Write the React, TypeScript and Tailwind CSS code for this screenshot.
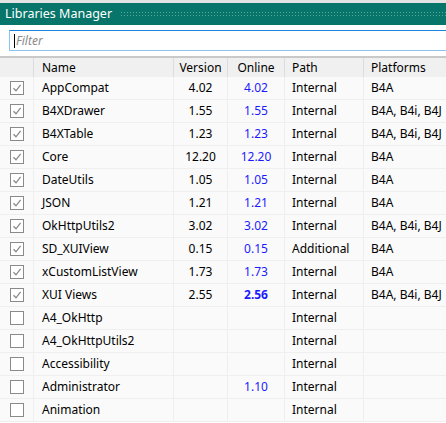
import React from "react";

type Row = {
  checked: boolean;
  name: string;
  version: string;
  online: string;
  onlineBold?: boolean;
  path: string;
  platforms: string;
};

const rows: Row[] = [
  { checked: true, name: "AppCompat", version: "4.02", online: "4.02", path: "Internal", platforms: "B4A" },
  { checked: true, name: "B4XDrawer", version: "1.55", online: "1.55", path: "Internal", platforms: "B4A, B4i, B4J" },
  { checked: true, name: "B4XTable", version: "1.23", online: "1.23", path: "Internal", platforms: "B4A, B4i, B4J" },
  { checked: true, name: "Core", version: "12.20", online: "12.20", path: "Internal", platforms: "B4A" },
  { checked: true, name: "DateUtils", version: "1.05", online: "1.05", path: "Internal", platforms: "B4A" },
  { checked: true, name: "JSON", version: "1.21", online: "1.21", path: "Internal", platforms: "B4A" },
  { checked: true, name: "OkHttpUtils2", version: "3.02", online: "3.02", path: "Internal", platforms: "B4A, B4i, B4J" },
  { checked: true, name: "SD_XUIView", version: "0.15", online: "0.15", path: "Additional", platforms: "B4A" },
  { checked: true, name: "xCustomListView", version: "1.73", online: "1.73", path: "Internal", platforms: "B4A" },
  { checked: true, name: "XUI Views", version: "2.55", online: "2.56", onlineBold: true, path: "Internal", platforms: "B4A, B4i, B4J" },
  { checked: false, name: "A4_OkHttp", version: "", online: "", path: "Internal", platforms: "" },
  { checked: false, name: "A4_OkHttpUtils2", version: "", online: "", path: "Internal", platforms: "" },
  { checked: false, name: "Accessibility", version: "", online: "", path: "Internal", platforms: "" },
  { checked: false, name: "Administrator", version: "", online: "1.10", path: "Internal", platforms: "" },
  { checked: false, name: "Animation", version: "", online: "", path: "Internal", platforms: "" },
];

const cols = "grid grid-cols-[34px_140px_54px_57px_79px_1fr]";

function Check({ on }: { on: boolean }) {
  return (
    <div className="w-[14px] h-[14px] border border-[#8a8a8a] bg-white flex items-center justify-center">
      {on && (
        <svg width="10" height="10" viewBox="0 0 10 10">
          <path d="M1.5 5.2 L4 7.8 L8.6 1.8" fill="none" stroke="#8a8a8a" strokeWidth="1.3" />
        </svg>
      )}
    </div>
  );
}

export default function App() {
  return (
    <div
      className="w-[446px] h-[423px] overflow-hidden bg-white text-[12px] text-black"
      style={{ fontFamily: '"Segoe UI", "Noto Sans", sans-serif' }}
    >
      <div className="h-[3px] bg-[#e4e4e4]" />
      <div className="h-[22px] bg-[#08756a] flex items-center pl-[5px]">
        <span className="text-white text-[12.5px] leading-none whitespace-nowrap">Libraries Manager</span>
        <div className="ml-[8px] flex-1 h-[6px] bg-[radial-gradient(circle,#5aa79e_0.7px,transparent_0.9px)] bg-[length:3px_3px]" />
      </div>
      <div className="h-[5px]" />
      <div className="pl-[9px] h-[21px]">
        <div className="h-[21px] border-t border-l border-b border-t-[#1a86e0] border-l-[#8cc4f0] border-b-[#8cc4f0] flex items-center pl-[4px]">
          <div className="w-px h-[14px] bg-black" />
          <span className="italic text-[#8a8a8a] ml-[1px] leading-none">Filter</span>
        </div>
      </div>
      <div className="h-[5px]" />
      <div className={`${cols} h-[19px] bg-[#f0f0f0] border-t-2 border-[#c9c9c9] box-content`}>
        <div className="border-r border-[#dcdcdc]" />
        <div className="border-r border-[#dcdcdc] pl-[8px] flex items-center">Name</div>
        <div className="border-r border-[#dcdcdc] flex items-center justify-center">Version</div>
        <div className="border-r border-[#dcdcdc] flex items-center justify-center">Online</div>
        <div className="border-r border-[#dcdcdc] pl-[7px] flex items-center">Path</div>
        <div className="pl-[7px] flex items-center">Platforms</div>
      </div>
      {rows.map((r) => (
        <div key={r.name} className={`${cols} h-[23px] bg-[#fafafa] border-b border-[#efefef]`}>
          <div className="border-r border-[#efefef] flex items-center pl-[10px]">
            <Check on={r.checked} />
          </div>
          <div className="border-r border-[#efefef] pl-[8px] flex items-center whitespace-nowrap">{r.name}</div>
          <div className="border-r border-[#efefef] flex items-center justify-center">{r.version}</div>
          <div
            className={`border-r border-[#efefef] flex items-center justify-center text-[#1a1aff] ${r.onlineBold ? "font-bold" : ""}`}
          >
            {r.online}
          </div>
          <div className="border-r border-[#efefef] pl-[7px] flex items-center">{r.path}</div>
          <div className="pl-[7px] flex items-center whitespace-nowrap">{r.platforms}</div>
        </div>
      ))}
    </div>
  );
}
